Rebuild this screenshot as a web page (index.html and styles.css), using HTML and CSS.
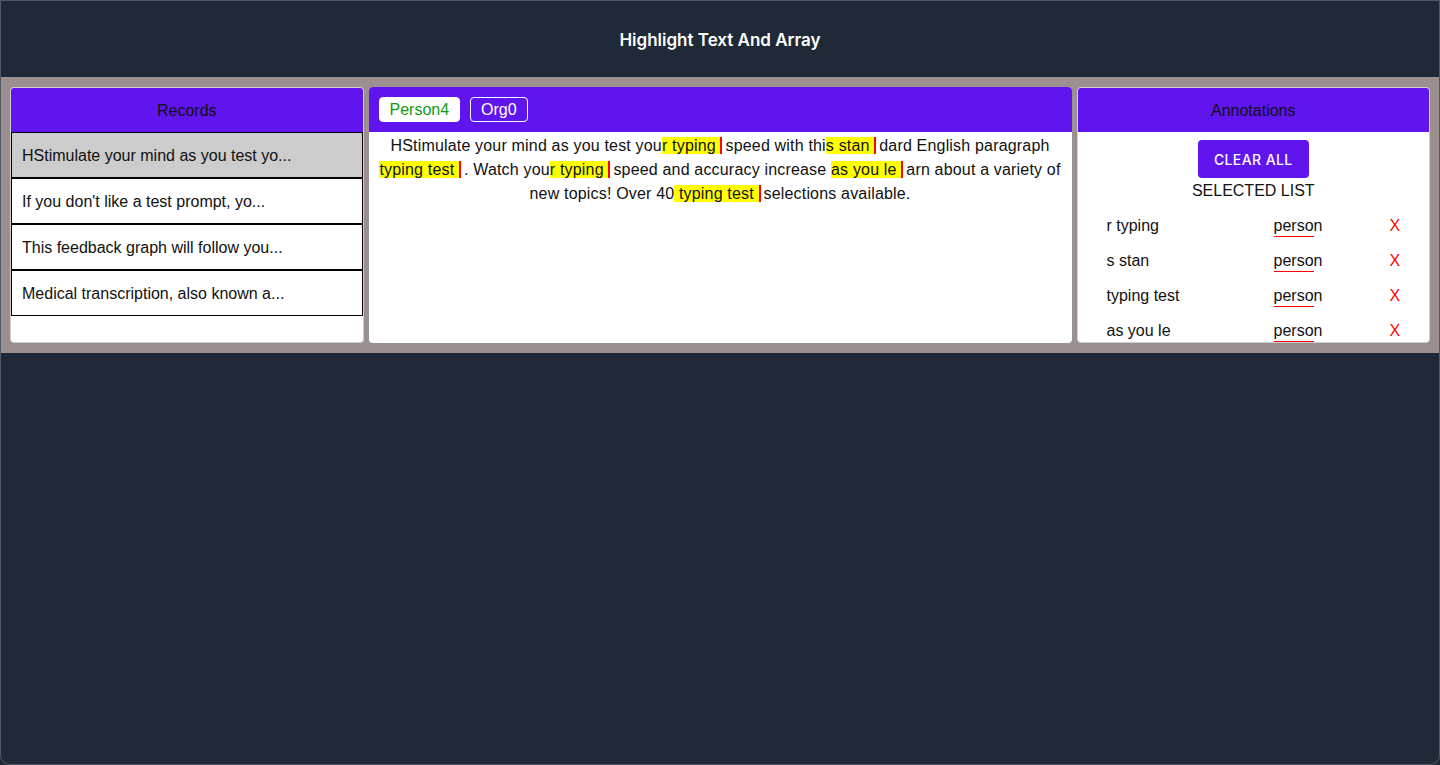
FILE: index.html
```html
<!DOCTYPE html>
<html lang="en">
<head>
<meta charset="utf-8">
<title>Highlight Text And Array</title>
<link rel="stylesheet" href="styles.css">
</head>
<body>
<div class="app">
  <header class="topbar">Highlight Text And Array</header>
  <main class="band">
    <section class="panel records">
      <div class="panel-head">Records</div>
      <ul class="record-list">
        <li class="record active">HStimulate your mind as you test yo...</li>
        <li class="record">If you don't like a test prompt, yo...</li>
        <li class="record">This feedback graph will follow you...</li>
        <li class="record">Medical transcription, also known a...</li>
      </ul>
    </section>
    <section class="panel editor">
      <div class="panel-head tags">
        <button class="tag tag-on">Person4</button>
        <button class="tag tag-off">Org0</button>
      </div>
      <p class="doc">HStimulate your mind as you test you<mark>r typing </mark>speed with thi<mark>s stan </mark>dard English paragraph <mark>typing test </mark>. Watch you<mark>r typing </mark>speed and accuracy increase <mark>as you le </mark>arn about a variety of new topics! Over 40<mark> typing test </mark>selections available.</p>
    </section>
    <section class="panel annotations">
      <div class="panel-head">Annotations</div>
      <div class="ann-body">
        <button class="clear">CLEAR ALL</button>
        <div class="sel-title">SELECTED LIST</div>
        <div class="sel-list">
          <div class="sel-row"><span class="sel-text">r typing</span><span class="sel-type">person</span><span class="sel-x">X</span></div>
          <div class="sel-row"><span class="sel-text">s stan</span><span class="sel-type">person</span><span class="sel-x">X</span></div>
          <div class="sel-row"><span class="sel-text">typing test</span><span class="sel-type">person</span><span class="sel-x">X</span></div>
          <div class="sel-row"><span class="sel-text">as you le</span><span class="sel-type">person</span><span class="sel-x">X</span></div>
        </div>
      </div>
    </section>
  </main>
</div>
</body>
</html>
```

FILE: styles.css
```css
* { box-sizing: border-box; }
html, body { margin: 0; padding: 0; height: 100%; }
body {
  font-family: "Liberation Sans", Arial, sans-serif;
  font-size: 16px;
  color: #111;
  background: #1f2937;
}
.app {
  height: 765px;
  background: #1f2937;
  border: 1px solid #4f5866;
  border-radius: 0 0 10px 10px;
  overflow: hidden;
}
.topbar {
  height: 76px;
  display: flex;
  align-items: center;
  justify-content: center;
  color: #fff;
  font-family: Inter, "Liberation Sans", sans-serif;
  font-weight: 600;
  font-size: 17px;
  padding-top: 2px;
}
.band {
  background: #9b8f8f;
  padding: 10px 9px 10px 9px;
  display: flex;
  gap: 5px;
  height: 276px;
}
.panel {
  background: #fff;
  border: 1px solid #cfcfcf;
  border-radius: 4px;
  overflow: hidden;
  height: 256px;
  display: flex;
  flex-direction: column;
}
.records, .annotations { flex: 1 1 0; }
.editor { flex: 2 1 0; border: none; }
.panel-head {
  background: #6015ee;
  height: 44px;
  flex: none;
  display: flex;
  align-items: center;
  justify-content: center;
  color: #111;
  padding-top: 2px;
}
.editor .panel-head { height: 45px; padding-top: 0; }
.record-list { list-style: none; margin: 0; padding: 0; }
.record {
  border: 1px solid #000;
  height: 46px;
  padding: 2px 10px 0;
  display: flex;
  align-items: center;
  line-height: 20px;
}
.record.active { background: #cccccc; }
.tags { justify-content: flex-start; gap: 10px; padding: 0 10px; }
.tag {
  font: inherit;
  font-size: 16px;
  height: 25px;
  padding: 0 10px;
  border-radius: 4px;
  line-height: 23px;
}
.tag-on { background: #fff; color: #129a12; border: 1px solid #fff; }
.tag-off { background: transparent; color: #fff; border: 1px solid #fff; }
.doc {
  margin: 0;
  padding: 2px 10px 0;
  text-align: center;
  line-height: 24px;
  letter-spacing: 0.18px;
  color: #111;
}
mark {
  background: #ffff00;
  color: #111;
  border-right: 2px solid #ff0000;
  margin-right: 3px;
}
.ann-body {
  display: flex;
  flex-direction: column;
  align-items: center;
  overflow: hidden;
}
.ann-body > * { flex: none; }
.clear {
  margin-top: 8px;
  background: #6015ee;
  color: #fff;
  border: none;
  border-radius: 4px;
  font-family: Inter, "Liberation Sans", sans-serif;
  font-size: 14px;
  font-weight: 500;
  letter-spacing: 0.4px;
  height: 38px;
  padding: 0 16px;
  white-space: nowrap;
}
.sel-title { margin-top: 3px; line-height: 20px; }
.sel-list { width: 100%; padding-top: 7px; }
.sel-row {
  display: grid;
  grid-template-columns: 167px 116px 1fr;
  height: 35px;
  align-items: center;
  padding-left: 29px;
}
.sel-type {
  width: 40px;
  line-height: 20px;
  border-bottom: 1.5px solid #ff0000;
  white-space: nowrap;
  padding-top: 2px;
}
.sel-x { color: #ff0000; }
```
